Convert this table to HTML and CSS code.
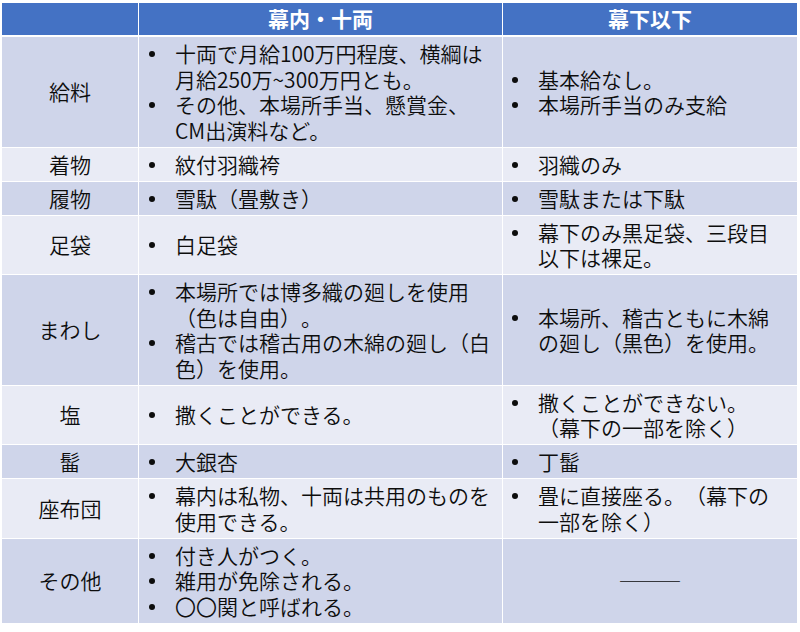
FILE: index.html
```html
<!DOCTYPE html>
<html lang="ja">
<head>
<meta charset="utf-8">
<title>幕内・十両と幕下以下</title>
<link rel="stylesheet" href="styles.css">
</head>
<body>
<div class="table">
  <div class="row head">
    <div class="c"></div>
    <div class="c">幕内・十両</div>
    <div class="c">幕下以下</div>
  </div>
  <div class="row dark">
    <div class="c lab">給料</div>
    <div class="c mid"><ul class="list"><li>十両で月給100万円程度、横綱は月給250万~300万円とも。</li><li>その他、本場所手当、懸賞金、CM出演料など。</li></ul></div>
    <div class="c end"><ul class="list"><li>基本給なし。</li><li>本場所手当のみ支給</li></ul></div>
  </div>
  <div class="row light">
    <div class="c lab">着物</div>
    <div class="c mid"><ul class="list"><li>紋付羽織袴</li></ul></div>
    <div class="c end"><ul class="list"><li>羽織のみ</li></ul></div>
  </div>
  <div class="row dark">
    <div class="c lab">履物</div>
    <div class="c mid"><ul class="list"><li>雪駄（畳敷き）</li></ul></div>
    <div class="c end"><ul class="list"><li>雪駄または下駄</li></ul></div>
  </div>
  <div class="row light">
    <div class="c lab">足袋</div>
    <div class="c mid"><ul class="list"><li>白足袋</li></ul></div>
    <div class="c end"><ul class="list"><li>幕下のみ黒足袋、三段目以下は裸足。</li></ul></div>
  </div>
  <div class="row dark">
    <div class="c lab">まわし</div>
    <div class="c mid"><ul class="list"><li>本場所では博多織の廻しを使用（色は自由）。</li><li>稽古では稽古用の木綿の廻し（白色）を使用。</li></ul></div>
    <div class="c end"><ul class="list"><li>本場所、稽古ともに木綿の廻し（黒色）を使用。</li></ul></div>
  </div>
  <div class="row light">
    <div class="c lab">塩</div>
    <div class="c mid"><ul class="list"><li>撒くことができる。</li></ul></div>
    <div class="c end"><ul class="list"><li>撒くことができない。（幕下の一部を除く）</li></ul></div>
  </div>
  <div class="row dark">
    <div class="c lab">髷</div>
    <div class="c mid"><ul class="list"><li>大銀杏</li></ul></div>
    <div class="c end"><ul class="list"><li>丁髷</li></ul></div>
  </div>
  <div class="row light">
    <div class="c lab">座布団</div>
    <div class="c mid"><ul class="list"><li>幕内は私物、十両は共用のものを使用できる。</li></ul></div>
    <div class="c end"><ul class="list"><li>畳に直接座る。（幕下の一部を除く）</li></ul></div>
  </div>
  <div class="row dark">
    <div class="c lab">その他</div>
    <div class="c mid"><ul class="list"><li>付き人がつく。</li><li>雑用が免除される。</li><li>〇〇関と呼ばれる。</li></ul></div>
    <div class="c lab dash">―――</div>
  </div>
</div>
</body>
</html>
```
FILE: styles.css
```css
html, body {
  margin: 0;
  padding: 0;
  background: #ffffff;
}

body {
  font-family: "Noto Sans CJK JP", "Noto Sans", sans-serif;
}

.table {
  display: grid;
  grid-template-columns: 136px 363px 294px;
  gap: 1px;
  width: 795px;
  margin: 3px 0 0 2px;
  background: #ffffff;
}

.row {
  display: contents;
}

.c {
  display: flex;
  align-items: center;
  padding: 4px 10px 3.5px 10px;
  font-size: 21px;
  font-weight: 350;
  line-height: 25.5px;
  color: #0d0d0d;
  text-spacing-trim: space-all;
}

.head .c {
  background: #4472c4;
  color: #ffffff;
  font-weight: 700;
  justify-content: center;
  padding: 3.25px 0;
  margin-bottom: 1px;
}

.dark .c {
  background: #cfd5ea;
}

.light .c {
  background: #e9ebf5;
}

.lab {
  justify-content: center;
  text-align: center;
}

.dash {
  letter-spacing: 3px;
  padding-left: 13px;
}

.mid {
  padding-left: 10px;
  padding-right: 10px;
}

.end {
  padding-left: 9px;
  padding-right: 16px;
}

.list {
  margin: 0;
  padding: 0;
  list-style: none;
  width: 100%;
}

.list li {
  display: flex;
  align-items: flex-start;
}

.list li::before {
  content: "";
  flex: 0 0 6px;
  height: 6px;
  margin: 10px 20px 0 0;
  border-radius: 50%;
  background: #0d0d0d;
}
```
